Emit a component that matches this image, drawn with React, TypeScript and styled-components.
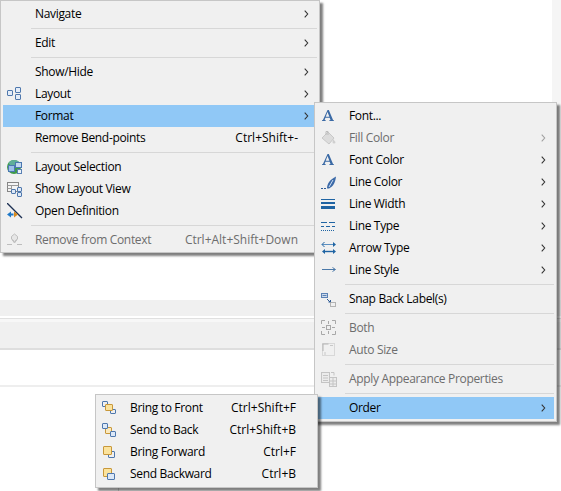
import React from 'react';
import styled, { createGlobalStyle } from 'styled-components';

const GlobalStyle = createGlobalStyle`
    html, body {
        margin: 0;
        padding: 0;
        background: #fff;
    }
`;

const Blue = '#4f78ad';
const Gold = '#c8983a';

const LayoutIcon = () => (
    <svg width="16" height="16" viewBox="0 0 16 16" fill="#e3ecf8" stroke={Blue}>
        <rect x="0.5" y="4.5" width="5" height="5" rx="0.5" />
        <rect x="8.5" y="1.5" width="5" height="5" rx="0.5" />
        <rect x="8.5" y="8.5" width="5" height="5" rx="0.5" />
    </svg>
);

const LayoutSelectionIcon = () => (
    <svg width="16" height="16" viewBox="0 0 16 16">
        <circle cx="7" cy="8" r="7" fill="#3f9a4a" />
        <path d="M1.500 4c2-3.500 8-4 11-.5L9 6H3z" fill="#5fae9a" />
        <rect x="1.500" y="6.500" width="6" height="6" fill="#9cc0e8" stroke="#4a78b0" />
        <rect x="8.500" y="3.500" width="6" height="5" fill="#c4d8f0" stroke="#4a78b0" />
        <rect x="10.500" y="10.500" width="4" height="4" fill="#eef3fa" stroke="#5b82b5" />
    </svg>
);

const ShowLayoutIcon = () => (
    <svg width="16" height="16" viewBox="0 0 16 16" fill="none">
        <rect x="0.5" y="1.5" width="11" height="9" fill="#f4f4f4" stroke="#858585" />
        <path d="M0.5 4.500h11M4.500 4.500v6M0.5 7.500h4" stroke="#9a9a9a" />
        <rect x="4.500" y="8.500" width="4" height="4" rx="0.5" fill="#dfe9f6" stroke={Blue} />
        <rect x="10.500" y="6.500" width="4" height="4" rx="0.5" fill="#dfe9f6" stroke={Blue} />
        <rect x="10.500" y="11.500" width="4" height="4" rx="0.5" fill="#dfe9f6" stroke={Blue} />
    </svg>
);

const OpenDefinitionIcon = () => (
    <svg width="16" height="16" viewBox="0 0 16 16" fill="none">
        <path d="M0 0l15 15" stroke="#1c2f52" strokeWidth="1.300" />
        <path d="M0 11.500l4-3v6z" fill="#1e78c8" />
        <path d="M4 10.500h2.500v2H4z" fill="#1e78c8" />
        <path d="M11 11.500l-4-3v6z" fill="#d98a1e" />
    </svg>
);

const RemoveContextIcon = () => (
    <svg width="16" height="16" viewBox="0 0 16 16" fill="none" stroke="#bdbdbd">
        <path d="M0 12.500h5M10 12.500h5" />
        <path d="M4.500 4.500l3-2.500 3 2.500v2.500l-3 2.500-3-2.500z" fill="#e6e6e6" />
        <path d="M5 7.500l2.500 3.500 2.500-3.500" />
    </svg>
);

const FontIcon = () => (
    <svg width="16" height="16" viewBox="0 0 16 16">
        <path
            transform="translate(0.15 1.15) scale(0.85)"
            d="M1 14h4.400v-.9l-1.300-.3.9-2.600h5l1 2.600-1.400.3v.9H15v-.9l-1-.3L9 1H7.500L2.100 12.800l-1.100.3zM5.400 9l2.100-5.600L9.700 9z"
            fill="#3b6aa5"
        />
    </svg>
);

const FillIcon = () => (
    <svg width="16" height="16" viewBox="0 0 16 16">
        <path d="M1 8l6-6 6 6-5 6z" fill="#dcdcdc" stroke="#c8c8c8" />
        <path d="M5 5V1.500h2V5" fill="none" stroke="#bdbdbd" />
        <path d="M12 9l2.500 3a1.500 1.500 0 1 1-3 0z" fill="#cfcfcf" />
    </svg>
);

const LineColorIcon = () => (
    <svg width="16" height="16" viewBox="0 0 16 16">
        <path d="M0 14.500h2M3 14.500h2" stroke="#2d5a96" />
        <path d="M6 14.500c0-5 3-9 9-12-.5 5-2.500 10-7 12z" fill="#3c6aa8" />
        <path d="M8 13l4-7" stroke="#cfdff2" />
    </svg>
);

const LineWidthIcon = () => (
    <svg width="16" height="16" viewBox="0 0 16 16" fill="#1f64a3">
        <rect x="0" y="3" width="14" height="1" />
        <rect x="0" y="6" width="14" height="2" />
        <rect x="0" y="10" width="14" height="3" />
    </svg>
);

const LineTypeIcon = () => (
    <svg width="16" height="16" viewBox="0 0 16 16" fill="none" stroke="#1f64a3">
        <path d="M0 4.500h6M8 4.500h6" />
        <path d="M0 8.500h3M5 8.500h4M11 8.500h3" />
        <path d="M0 12.500h14" strokeDasharray="1 1" />
    </svg>
);

const ArrowTypeIcon = () => (
    <svg width="16" height="16" viewBox="0 0 16 16" fill="#1f64a3">
        <path d="M1 4.500h11" stroke="#5b8fc0" />
        <path d="M12 2l3 2.500L12 7z" />
        <path d="M3.500 2L1 4.500 3.500 7" stroke="#1f64a3" fill="none" />
        <path d="M3 11.500h9" stroke="#1f64a3" strokeWidth="1.400" />
        <path d="M4 9L1 11.500 4 14zM12 9l3 2.500L12 14z" />
    </svg>
);

const LineStyleIcon = () => (
    <svg width="16" height="16" viewBox="0 0 16 16" fill="none" stroke="#4a78a8">
        <path d="M1 7.500h13M11.500 5.500l3 2-3 2" />
    </svg>
);

const SnapIcon = () => (
    <svg width="16" height="16" viewBox="0 0 16 16" fill="none">
        <rect x="0.5" y="2.500" width="6" height="4" fill="#cfdcec" stroke="#5b82b5" />
        <path d="M1.500 4.500h4" stroke="#5b82b5" />
        <path d="M6 8l3 3M7.500 11H9.500V9" stroke="#2d5a96" />
        <rect x="9.500" y="11.500" width="5" height="4" stroke="#777" strokeDasharray="1 1" />
    </svg>
);

const BothIcon = () => (
    <svg width="16" height="16" viewBox="0 0 16 16" fill="none" stroke="#a8a8a8">
        <path d="M.5 4V.5H4M11 .5h3.500V4M.5 11v3.500H4M11 14.500h3.500V11" />
        <rect x="5.500" y="5.500" width="4" height="4" />
        <path d="M7.500 1v3M7.500 11v3M1 7.500h3M11 7.500h3" />
    </svg>
);

const AutoSizeIcon = () => (
    <svg width="16" height="16" viewBox="0 0 16 16" fill="none" stroke="#c0c0c0">
        <rect x="1.500" y="1.500" width="12" height="12" strokeDasharray="1 1" />
        <path d="M1.500 2h6M2 2v7" stroke="#b4b4b4" />
        <path d="M9 3.500h3M4 10v3" stroke="#c8c8c8" />
    </svg>
);

const ApplyIcon = () => (
    <svg width="16" height="16" viewBox="0 0 16 16" fill="#ececec" stroke="#c4c4c4">
        <rect x="0.500" y="1.500" width="8" height="10" />
        <path d="M2 4.500h5M2 7h5M2 9.500h5" fill="none" />
        <rect x="8.500" y="6.500" width="7" height="9" />
        <path d="M8.500 10h7M8.500 13h7M12 6.500v9" fill="none" />
        <path d="M10 1.500h3v3" fill="none" />
    </svg>
);

const BringForwardIcon = () => (
    <svg width="16" height="16" viewBox="0 0 16 16">
        <rect x="6.500" y="7.500" width="6" height="6" rx="0.5" fill="none" stroke={Blue} />
        <rect x="1.500" y="2.500" width="8" height="8" rx="0.5" fill="#fbe39d" stroke={Gold} />
    </svg>
);

const SendBackwardIcon = () => (
    <svg width="16" height="16" viewBox="0 0 16 16">
        <rect x="1.500" y="2.500" width="8" height="8" rx="0.5" fill="#fbe39d" stroke={Gold} />
        <rect x="5.500" y="7.500" width="7" height="6" rx="0.5" fill="#dce8f7" stroke={Blue} />
    </svg>
);

const FrontIcon = () => (
    <svg width="16" height="16" viewBox="0 0 16 16" fill="none">
        <rect x="0.500" y="1.500" width="5" height="5" rx="0.5" stroke={Blue} />
        <rect x="8.500" y="9.500" width="5" height="4" rx="0.5" stroke={Blue} />
        <rect x="3.500" y="4.500" width="7" height="6" rx="0.5" fill="#fbe39d" stroke={Gold} />
    </svg>
);

const ToBackIcon = () => (
    <svg width="16" height="16" viewBox="0 0 16 16" fill="none">
        <rect x="3.500" y="5.500" width="6" height="6" rx="0.5" fill="#fbe9bd" stroke={Gold} />
        <rect x="0.500" y="1.500" width="5" height="5" rx="0.5" fill="#dce8f7" stroke={Blue} />
        <rect x="8.500" y="9.500" width="5" height="5" rx="0.5" fill="#dce8f7" stroke={Blue} />
    </svg>
);

type Row =
    | { sep: true }
    | {
          sep?: false;
          label: string;
          icon?: React.ReactNode;
          shortcut?: string;
          more?: boolean;
          off?: boolean;
          active?: boolean;
      };

const mainRows: Row[] = [
    { label: 'Navigate', more: true },
    { sep: true },
    { label: 'Edit', more: true },
    { sep: true },
    { label: 'Show/Hide', more: true },
    { label: 'Layout', more: true, icon: <LayoutIcon /> },
    { label: 'Format', more: true, active: true },
    { label: 'Remove Bend-points', shortcut: 'Ctrl+Shift+-' },
    { sep: true },
    { label: 'Layout Selection', icon: <LayoutSelectionIcon /> },
    { label: 'Show Layout View', icon: <ShowLayoutIcon /> },
    { label: 'Open Definition', icon: <OpenDefinitionIcon /> },
    { sep: true },
    { label: 'Remove from Context', shortcut: 'Ctrl+Alt+Shift+Down', off: true, icon: <RemoveContextIcon /> },
];

const formatRows: Row[] = [
    { label: 'Font...', icon: <FontIcon /> },
    { label: 'Fill Color', more: true, off: true, icon: <FillIcon /> },
    { label: 'Font Color', more: true, icon: <FontIcon /> },
    { label: 'Line Color', more: true, icon: <LineColorIcon /> },
    { label: 'Line Width', more: true, icon: <LineWidthIcon /> },
    { label: 'Line Type', more: true, icon: <LineTypeIcon /> },
    { label: 'Arrow Type', more: true, icon: <ArrowTypeIcon /> },
    { label: 'Line Style', more: true, icon: <LineStyleIcon /> },
    { sep: true },
    { label: 'Snap Back Label(s)', icon: <SnapIcon /> },
    { sep: true },
    { label: 'Both', off: true, icon: <BothIcon /> },
    { label: 'Auto Size', off: true, icon: <AutoSizeIcon /> },
    { sep: true },
    { label: 'Apply Appearance Properties', off: true, icon: <ApplyIcon /> },
    { sep: true },
    { label: 'Order', more: true, active: true },
];

const orderRows: Row[] = [
    { label: 'Bring to Front', shortcut: 'Ctrl+Shift+F', icon: <FrontIcon /> },
    { label: 'Send to Back', shortcut: 'Ctrl+Shift+B', icon: <ToBackIcon /> },
    { label: 'Bring Forward', shortcut: 'Ctrl+F', icon: <BringForwardIcon /> },
    { label: 'Send Backward', shortcut: 'Ctrl+B', icon: <SendBackwardIcon /> },
];

function MenuRows({ rows }: { rows: Row[] }) {
    return (
        <>
            {rows.map((row, i) =>
                row.sep ? (
                    <Separator key={i} />
                ) : (
                    <Item key={row.label} $active={row.active} $off={row.off}>
                        <IconSlot>{row.icon}</IconSlot>
                        <Label>{row.label}</Label>
                        {row.shortcut && <Shortcut>{row.shortcut}</Shortcut>}
                        {row.more && (
                            <Chevron width="5" height="8" viewBox="0 0 5 8" $off={row.off}>
                                <path d="M.7.7l3 3.300-3 3.300" fill="none" stroke="currentColor" strokeWidth="1.100" />
                            </Chevron>
                        )}
                    </Item>
                ),
            )}
        </>
    );
}

export default function App(): JSX.Element {
    return (
        <>
            <GlobalStyle />
            <Page>
                <TopPane>
                    <TopStrip />
                </TopPane>
                <ToolBand />
                <Gap2 />
                <TabBand />
                <ContentPane />
                <BottomPane>
                    <BottomLeft />
                </BottomPane>

                <Menu $left={0} $top={0} $width={320} $zIndex={1} $tail={1}>
                    <MenuRows rows={mainRows} />
                </Menu>
                <Menu $left={314} $top={102} $width={243} $zIndex={2}>
                    <MenuRows rows={formatRows} />
                </Menu>
                <Menu $left={95} $top={394} $width={223} $zIndex={3}>
                    <MenuRows rows={orderRows} />
                </Menu>
            </Page>
        </>
    );
}

const Page = styled.div`
    position: relative;
    width: 561px;
    height: 491px;
    overflow: hidden;
    display: flex;
    flex-direction: column;
    background: #fff;
    font-family: 'Open Sans', 'Noto Sans', sans-serif;
    font-size: 12px;
`;

const TopPane = styled.div`
    height: 300px;
    display: flex;
    justify-content: flex-end;
`;

const TopStrip = styled.div`
    width: 9px;
    background: #f5f5f5;
`;

const ToolBand = styled.div`
    height: 16px;
    background: #f0f0f0;
`;

const Gap2 = styled.div`
    height: 3px;
    background: #fff;
    border-bottom: 1px solid #e0e0e0;
    box-sizing: border-box;
`;

const TabBand = styled.div`
    height: 31px;
    box-sizing: border-box;
    background: #f0f0f0;
    border-top: 3px solid #f7f7f7;
    border-bottom: 2px solid #dedede;
`;

const ContentPane = styled.div`
    height: 35px;
    border-bottom: 2px solid #eeeeee;
`;

const BottomPane = styled.div`
    flex: 1;
    display: flex;
    align-items: flex-end;
`;

const BottomLeft = styled.div`
    width: 118px;
    height: 40px;
    border-right: 1px solid #d8d8d8;
`;

const Menu = styled.div<{ $left: number; $top: number; $width: number; $zIndex: number; $tail?: number }>`
    position: absolute;
    left: ${p => p.$left}px;
    top: ${p => p.$top}px;
    width: ${p => p.$width}px;
    z-index: ${p => p.$zIndex};
    box-sizing: border-box;
    padding: 2px 2px ${p => p.$tail ?? 2}px;
    background: #f0f0f0;
    border: 1px solid #c6c6c6;
    box-shadow: 3px 3px 2px rgba(0, 0, 0, 0.5);
`;

const Item = styled.div<{ $active?: boolean; $off?: boolean }>`
    height: 22px;
    display: flex;
    align-items: center;
    color: ${p => (p.$off ? '#6d6d6d' : '#000')};
    background: ${p => (p.$active ? '#90c8f6' : 'transparent')};
`;

const IconSlot = styled.span`
    flex: 0 0 32px;
    box-sizing: border-box;
    padding-left: 4px;
    height: 16px;
    display: flex;
`;

const Label = styled.span`
    flex: 1 1 auto;
    margin-top: -2px;
    white-space: nowrap;
    letter-spacing: -0.33px;
`;

const Shortcut = styled.span`
    flex: 0 0 auto;
    margin-top: -2px;
    margin-right: 19px;
    white-space: nowrap;
`;

const Chevron = styled.svg<{ $off?: boolean }>`
    flex: 0 0 auto;
    margin-right: 8px;
    color: ${p => (p.$off ? '#a0a0a0' : '#333')};
`;

const Separator = styled.div`
    height: 7px;
    margin-left: 28px;
    display: flex;
    align-items: center;

    &::before {
        content: '';
        flex: 1;
        height: 1px;
        background: #d7d7d7;
    }
`;
